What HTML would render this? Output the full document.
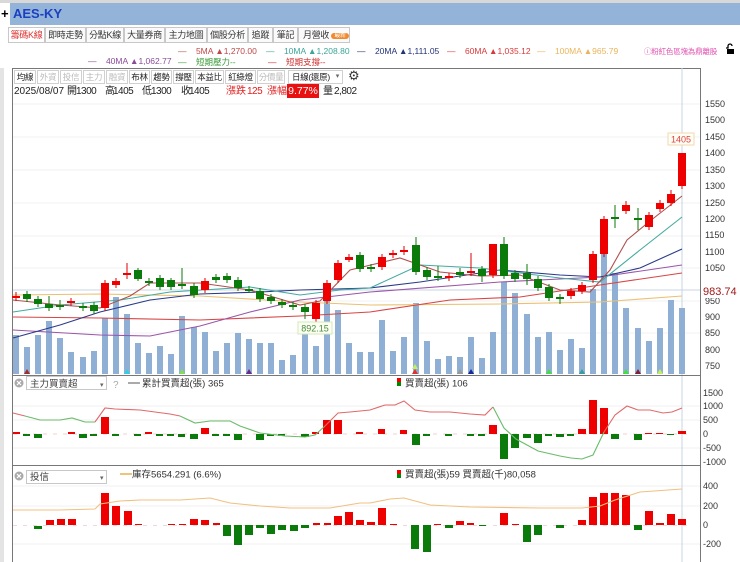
<!DOCTYPE html>
<html><head><meta charset="utf-8">
<style>
*{margin:0;padding:0;box-sizing:border-box}
body{width:740px;height:562px;overflow:hidden;background:#fff;font-family:"Liberation Sans","Noto Sans CJK TC",sans-serif;position:relative}
.a{position:absolute;white-space:nowrap}
.tab{position:absolute;top:27px;height:16px;border:1px solid #c8c8c8;background:#fafafa;font-size:9px;line-height:14px;text-align:center;color:#333;white-space:nowrap;overflow:hidden;letter-spacing:-0.3px}
.btn{position:absolute;top:70px;height:14px;border:1px solid #d0d0d0;background:#fff;font-size:8.5px;line-height:12px;text-align:center;color:#222;white-space:nowrap;overflow:hidden;letter-spacing:-0.3px}
.g{color:#bbb}
.leg{position:absolute;font-size:8.5px;white-space:nowrap}
.inf{position:absolute;top:86px;height:12px;font-size:10px;line-height:12px;color:#222;white-space:nowrap}
.n{letter-spacing:-0.5px}
.r{color:#e02020}
</style></head><body>
<div class="a" style="left:0;top:0;width:740px;height:3px;background:#d8d8d8"></div>
<div class="a" style="left:0;top:3px;width:740px;height:22px;background:#94b3d8"></div>
<div class="a" style="left:0;top:3px;width:10px;height:22px;background:#fff"></div>
<div class="a" style="left:1px;top:6px;font-size:13px;font-weight:bold;color:#000">+</div>
<div class="a" style="left:13px;top:6px;font-size:13px;font-weight:bold;color:#1a3fc0">AES-KY</div>

<div class="tab" style="left:8px;width:37px;color:#d33;background:#fff">籌碼K線</div>
<div class="tab" style="left:45px;width:41px">即時走勢</div>
<div class="tab" style="left:86px;width:38px">分點K線</div>
<div class="tab" style="left:124px;width:41px">大量券商</div>
<div class="tab" style="left:165px;width:42px">主力地圖</div>
<div class="tab" style="left:207px;width:41px">個股分析</div>
<div class="tab" style="left:248px;width:25px">追蹤</div>
<div class="tab" style="left:273px;width:25px">筆記</div>
<div class="tab" style="left:298px;width:52px;text-align:left;padding-left:4px">月營收 <span style="background:#f08a30;color:#fff;border-radius:5px;font-size:6px;padding:0 3px;vertical-align:1px">最新</span></div>

<div class="leg" style="left:178px;top:46px;color:#c04848"><span style="color:#b05050">—</span>&nbsp;&nbsp;&nbsp; 5MA ▲1,270.00</div>
<div class="leg" style="left:266px;top:46px;color:#3aa59a"><span>—</span>&nbsp;&nbsp;&nbsp; 10MA ▲1,208.80</div>
<div class="leg" style="left:357px;top:46px;color:#223377"><span>—</span>&nbsp;&nbsp;&nbsp; 20MA ▲1,111.05</div>
<div class="leg" style="left:447px;top:46px;color:#d83a3a"><span>—</span>&nbsp;&nbsp;&nbsp; 60MA ▲1,035.12</div>
<div class="leg" style="left:537px;top:46px;color:#eab45a"><span>—</span>&nbsp;&nbsp;&nbsp; 100MA ▲965.79</div>
<div class="leg" style="left:644px;top:46px;color:#e050b0;font-size:7.5px;letter-spacing:-0.2px">ⓘ粉紅色區塊為鼎離股</div>
<svg class="a" style="left:724px;top:43px" width="12" height="12" viewBox="0 0 12 12"><path d="M2 5h2V3a2 2 0 0 1 4 0" fill="none" stroke="#000" stroke-width="1.3"/><rect x="3" y="6" width="7" height="5" fill="#000"/></svg>
<div class="leg" style="left:88px;top:56px;color:#8a4a9a"><span>—</span>&nbsp;&nbsp;&nbsp; 40MA ▲1,062.77</div>
<div class="leg" style="left:178px;top:56px;color:#3a9a3a"><span>—</span>&nbsp;&nbsp;&nbsp; 短期壓力--</div>
<div class="leg" style="left:268px;top:56px;color:#d03030"><span>—</span>&nbsp;&nbsp;&nbsp; 短期支撐--</div>

<div class="a" style="left:0;top:68px;width:4px;height:494px;background:#e4e4e4"></div>
<div class="a" style="left:12px;top:68px;width:689px;height:494px;border:1px solid #777;border-bottom:none"></div>

<div class="btn" style="left:14px;width:22px">均線</div>
<div class="btn g" style="left:37px;width:22px">外資</div>
<div class="btn g" style="left:60px;width:22px">投信</div>
<div class="btn g" style="left:83px;width:22px">主力</div>
<div class="btn g" style="left:106px;width:22px">融資</div>
<div class="btn" style="left:129px;width:21px">布林</div>
<div class="btn" style="left:151px;width:21px">趨勢</div>
<div class="btn" style="left:173px;width:21px">撐壓</div>
<div class="btn" style="left:195px;width:29px">本益比</div>
<div class="btn" style="left:225px;width:31px">紅綠燈</div>
<div class="btn g" style="left:257px;width:28px">分價量</div>
<div class="btn" style="left:288px;width:55px;text-align:left;padding-left:3px">日線(還原)<span style="position:absolute;right:3px;font-size:7px;color:#666">▾</span></div>
<div class="a" style="left:348px;top:68px;font-size:13px;color:#333">⚙</div>

<div class="inf" style="left:14px">2025/08/07</div>
<div class="inf" style="left:67px">開</div><div class="inf n" style="left:76px">1300</div>
<div class="inf" style="left:105px">高</div><div class="inf n" style="left:113px">1405</div>
<div class="inf" style="left:142px">低</div><div class="inf n" style="left:151px">1300</div>
<div class="inf" style="left:181px">收</div><div class="inf n" style="left:189px">1405</div>
<div class="inf r" style="left:226px">漲跌</div><div class="inf n r" style="left:247px">125</div>
<div class="inf r" style="left:267px">漲幅</div>
<div class="a" style="left:287px;top:84px;width:32px;height:14px;background:#e81010;color:#fff;font-size:10.5px;line-height:14px;text-align:center">9.77%</div>
<div class="inf" style="left:323px">量</div><div class="inf n" style="left:334px">2,802</div>

<svg class="a" style="left:0;top:0" width="740" height="562" viewBox="0 0 740 562">
<g stroke="#f0f0f0" stroke-width="1">
<line x1="13" x2="700" y1="104" y2="104"/><line x1="13" x2="700" y1="137" y2="137"/><line x1="13" x2="700" y1="170" y2="170"/><line x1="13" x2="700" y1="203" y2="203"/><line x1="13" x2="700" y1="236" y2="236"/><line x1="13" x2="700" y1="268" y2="268"/><line x1="13" x2="700" y1="301" y2="301"/><line x1="13" x2="700" y1="333" y2="333"/>
<line x1="13" x2="700" y1="406" y2="406"/><line x1="13" x2="700" y1="420" y2="420"/><line x1="13" x2="700" y1="448" y2="448"/>
<line x1="13" x2="700" y1="486" y2="486"/><line x1="13" x2="700" y1="506" y2="506"/><line x1="13" x2="700" y1="544" y2="544"/>
</g>
<line x1="682" x2="682" y1="68" y2="562" stroke="#c8d4e4"/>
<line x1="13" x2="700" y1="290" y2="290" stroke="#c8d4e4"/>
<g fill="#8fb0d4">
<rect x="13" y="335" width="6" height="39"/><rect x="24" y="347" width="6" height="27"/><rect x="35" y="335" width="6" height="39"/><rect x="46" y="321" width="6" height="53"/><rect x="57" y="338" width="6" height="36"/><rect x="68" y="352" width="6" height="22"/><rect x="80" y="357" width="6" height="17"/><rect x="91" y="351" width="6" height="23"/><rect x="102" y="318" width="6" height="56"/><rect x="113" y="297" width="6" height="77"/><rect x="124" y="314" width="6" height="60"/><rect x="135" y="343" width="6" height="31"/><rect x="146" y="353" width="6" height="21"/><rect x="157" y="346" width="6" height="28"/><rect x="168" y="354" width="6" height="20"/><rect x="179" y="316" width="6" height="58"/><rect x="191" y="327" width="6" height="47"/><rect x="202" y="332" width="6" height="42"/><rect x="213" y="351" width="6" height="23"/><rect x="224" y="343" width="6" height="31"/><rect x="235" y="333" width="6" height="41"/><rect x="246" y="339" width="6" height="35"/><rect x="257" y="343" width="6" height="31"/><rect x="268" y="343" width="6" height="31"/><rect x="279" y="360" width="6" height="14"/><rect x="290" y="355" width="6" height="19"/><rect x="302" y="327" width="6" height="47"/><rect x="313" y="346" width="6" height="28"/><rect x="324" y="299" width="6" height="75"/><rect x="335" y="310" width="6" height="64"/><rect x="346" y="343" width="6" height="31"/><rect x="357" y="352" width="6" height="22"/><rect x="368" y="352" width="6" height="22"/><rect x="379" y="320" width="6" height="54"/><rect x="390" y="351" width="6" height="23"/><rect x="401" y="337" width="6" height="37"/><rect x="413" y="303" width="6" height="71"/><rect x="424" y="341" width="6" height="33"/><rect x="435" y="359" width="6" height="15"/><rect x="446" y="356" width="6" height="18"/><rect x="457" y="357" width="6" height="17"/><rect x="468" y="337" width="6" height="37"/><rect x="479" y="358" width="6" height="16"/><rect x="490" y="332" width="6" height="42"/><rect x="501" y="282" width="6" height="92"/><rect x="512" y="293" width="6" height="81"/><rect x="524" y="314" width="6" height="60"/><rect x="535" y="337" width="6" height="37"/><rect x="546" y="332" width="6" height="42"/><rect x="557" y="350" width="6" height="24"/><rect x="568" y="339" width="6" height="35"/><rect x="579" y="348" width="6" height="26"/><rect x="590" y="289" width="6" height="85"/><rect x="601" y="254" width="6" height="120"/><rect x="612" y="273" width="6" height="101"/><rect x="623" y="308" width="6" height="66"/><rect x="635" y="328" width="6" height="46"/><rect x="646" y="341" width="6" height="33"/><rect x="657" y="328" width="6" height="46"/><rect x="668" y="300" width="6" height="74"/><rect x="679" y="308" width="6" height="66"/>
</g>
<g fill="none" stroke-width="1.1">
<polyline stroke="#ecc070" points="13,295 100,294 200,296 300,302 370,305 500,304 600,302 682,296"/>
<polyline stroke="#d84444" points="13,317 100,318 200,320 300,316 370,312 450,300 520,297 600,285 682,273"/>
<polyline stroke="#9a55a8" points="13,330 100,335 150,336 200,326 250,312 300,300 370,292 500,282 600,277 682,265"/>
<polyline stroke="#2a3a8a" points="13,338 60,325 100,312 150,300 200,294 260,292 300,290 370,288 420,282 500,270 560,275 600,277 640,268 682,249"/>
<polyline stroke="#44aaa0" points="13,312 60,305 120,300 170,292 250,287 300,295 340,290 370,288 420,265 480,268 560,278 600,282 640,250 682,217"/>
<polyline stroke="#b05050" points="13,300 60,305 100,308 130,296 150,283 200,283 250,290 300,305 320,301 350,270 400,258 440,272 480,276 520,275 560,290 590,292 610,270 627,240 650,221 682,196"/>
</g>
<g stroke="#e00000" stroke-width="1">
<path d="M16 292V301M71 298V306M105 280V311M116 278V288M127 263V279M205 278V293M316 300V322M327 280V304M338 260V283M349 254V262M382 254V270M393 250V258M404 246V255M449 273V281M471 253V276M493 244V278M571 288V299M582 282V294M593 251V283M604 216V257M626 201V214M649 212V230M660 200V212M671 190V206M682 153V189"/>
</g>
<g fill="#ee0000">
<rect x="12" y="296" width="8" height="2"/><rect x="67" y="301" width="8" height="2"/><rect x="101" y="283" width="8" height="25"/><rect x="112" y="281" width="8" height="4"/><rect x="123" y="273" width="8" height="2"/><rect x="201" y="281" width="8" height="9"/><rect x="312" y="303" width="8" height="16"/><rect x="323" y="283" width="8" height="18"/><rect x="334" y="263" width="8" height="17"/><rect x="345" y="257" width="8" height="3"/><rect x="378" y="257" width="8" height="10"/><rect x="389" y="253" width="8" height="2"/><rect x="400" y="250" width="8" height="2"/><rect x="445" y="276" width="8" height="2"/><rect x="467" y="271" width="8" height="2"/><rect x="489" y="244" width="8" height="31"/><rect x="567" y="291" width="8" height="5"/><rect x="578" y="285" width="8" height="6"/><rect x="589" y="254" width="8" height="26"/><rect x="600" y="219" width="8" height="35"/><rect x="622" y="205" width="8" height="6"/><rect x="645" y="215" width="8" height="12"/><rect x="656" y="203" width="8" height="6"/><rect x="667" y="194" width="8" height="9"/><rect x="678" y="153" width="8" height="33"/>
</g>
<g stroke="#0a7a0a" stroke-width="1">
<path d="M27 291V302M38 296V307M49 296V311M60 300V310M83 303V311M94 302V314M138 268V281M149 278V286M160 275V290M171 278V290M182 268V289M194 283V298M216 274V283M227 273V283M238 277V291M249 286V293M260 288V302M271 294V304M282 299V308M293 302V310M305 304V319M360 252V272M371 264V272M416 237V275M427 267V280M438 266V281M460 268V278M482 266V282M504 237V279M515 270V282M527 264V285M538 276V291M549 284V301M560 294V304M615 205V228M638 208V230"/>
</g>
<g fill="#0a7a0a">
<rect x="23" y="294" width="8" height="5"/><rect x="34" y="299" width="8" height="5"/><rect x="45" y="304" width="8" height="4"/><rect x="56" y="305" width="8" height="2"/><rect x="79" y="306" width="8" height="2"/><rect x="90" y="305" width="8" height="6"/><rect x="134" y="270" width="8" height="9"/><rect x="145" y="281" width="8" height="2"/><rect x="156" y="278" width="8" height="9"/><rect x="167" y="280" width="8" height="7"/><rect x="178" y="284" width="8" height="2"/><rect x="190" y="286" width="8" height="9"/><rect x="212" y="277" width="8" height="3"/><rect x="223" y="276" width="8" height="4"/><rect x="234" y="280" width="8" height="8"/><rect x="245" y="289" width="8" height="2"/><rect x="256" y="291" width="8" height="8"/><rect x="267" y="297" width="8" height="4"/><rect x="278" y="302" width="8" height="3"/><rect x="289" y="305" width="8" height="2"/><rect x="301" y="307" width="8" height="5"/><rect x="356" y="255" width="8" height="14"/><rect x="367" y="267" width="8" height="2"/><rect x="412" y="245" width="8" height="27"/><rect x="423" y="270" width="8" height="7"/><rect x="434" y="276" width="8" height="2"/><rect x="456" y="272" width="8" height="3"/><rect x="478" y="269" width="8" height="7"/><rect x="500" y="244" width="8" height="32"/><rect x="511" y="273" width="8" height="6"/><rect x="523" y="273" width="8" height="6"/><rect x="534" y="279" width="8" height="9"/><rect x="545" y="287" width="8" height="11"/><rect x="556" y="297" width="8" height="2"/><rect x="611" y="217" width="8" height="2"/><rect x="634" y="218" width="8" height="2"/>
</g>
<g>
<path d="M24 374l3-5 3 5z" fill="#a03030"/><path d="M124 374l3-5 3 5z" fill="#30d0e0"/><path d="M179 374l3-5 3 5z" fill="#80e050"/><path d="M246 374l3-5 3 5z" fill="#6a2a90"/><path d="M412 374l3-5 3 5z" fill="#e03030"/><path d="M412 369l3-5 3 5z" fill="#c0f060"/><path d="M457 374l3-5 3 5z" fill="#999"/><path d="M468 374l3-5 3 5z" fill="#1a2a9a"/><path d="M546 374l3-5 3 5z" fill="#40e040"/><path d="M579 374l3-5 3 5z" fill="#30a0a0"/><path d="M623 374l3-5 3 5z" fill="#40e040"/><path d="M635 374l3-5 3 5z" fill="#802040"/><path d="M657 374l3-5 3 5z" fill="#c0f060"/>
</g>
<rect x="668" y="133" width="26" height="12" fill="#fffef4" stroke="#f0d8b0"/>
<text x="681" y="142.5" font-size="9" fill="#e04040" text-anchor="middle" font-family="Liberation Sans">1405</text>
<rect x="298" y="322" width="34" height="12" fill="#fbfff4" stroke="#d4e8b8"/>
<text x="315" y="331.5" font-size="9" fill="#4a8a3a" text-anchor="middle" font-family="Liberation Sans">892.15</text>
<g font-size="9" fill="#333" font-family="Liberation Sans">
<text x="705" y="107">1550</text><text x="705" y="123">1500</text><text x="705" y="140">1450</text><text x="705" y="156">1400</text><text x="705" y="173">1350</text><text x="705" y="189">1300</text><text x="705" y="206">1250</text><text x="705" y="222">1200</text><text x="705" y="238">1150</text><text x="705" y="255">1100</text><text x="705" y="271">1050</text><text x="705" y="304">950</text><text x="705" y="320">900</text><text x="705" y="336">850</text><text x="705" y="353">800</text><text x="705" y="369">750</text>
<text x="703" y="396">1500</text><text x="703" y="409">1000</text><text x="703" y="423">500</text><text x="703" y="437">0</text><text x="703" y="451">-500</text><text x="703" y="465">-1000</text>
<text x="703" y="489">400</text><text x="703" y="509">200</text><text x="703" y="528">0</text><text x="703" y="547">-200</text>
</g>
<rect x="702" y="284" width="38" height="14" fill="#fff"/>
<text x="703" y="295" font-size="11" fill="#a01818" font-family="Liberation Sans">983.74</text>
<line x1="12" x2="701" y1="375.5" y2="375.5" stroke="#777"/>
<line x1="12" x2="701" y1="465.5" y2="465.5" stroke="#777"/>
<line x1="13" x2="690" y1="434" y2="434" stroke="#f0d0d0" stroke-dasharray="4 6"/>
<g fill="#ee0000">
<rect x="13" y="432" width="7" height="2"/><rect x="68" y="432" width="7" height="2"/><rect x="101" y="417" width="8" height="17"/><rect x="145" y="432" width="7" height="2"/><rect x="201" y="428" width="8" height="6"/><rect x="312" y="432" width="7" height="2"/><rect x="323" y="420" width="8" height="14"/><rect x="334" y="420" width="8" height="14"/><rect x="356" y="432" width="7" height="2"/><rect x="378" y="429" width="7" height="5"/><rect x="400" y="430" width="7" height="4"/><rect x="489" y="425" width="8" height="9"/><rect x="578" y="429" width="8" height="5"/><rect x="589" y="400" width="8" height="34"/><rect x="600" y="408" width="8" height="26"/><rect x="645" y="433" width="7" height="1"/><rect x="656" y="433" width="7" height="1"/><rect x="678" y="431" width="8" height="3"/>
</g>
<g fill="#0a7a0a">
<rect x="23" y="434" width="7" height="2"/><rect x="34" y="434" width="8" height="4"/><rect x="79" y="434" width="8" height="4"/><rect x="90" y="434" width="7" height="2"/><rect x="112" y="434" width="7" height="2"/><rect x="134" y="434" width="7" height="2"/><rect x="156" y="434" width="7" height="2"/><rect x="167" y="434" width="7" height="2"/><rect x="178" y="434" width="7" height="3"/><rect x="190" y="434" width="8" height="5"/><rect x="212" y="434" width="7" height="2"/><rect x="223" y="434" width="7" height="2"/><rect x="234" y="434" width="8" height="6"/><rect x="256" y="434" width="8" height="6"/><rect x="267" y="434" width="7" height="2"/><rect x="278" y="434" width="7" height="2"/><rect x="301" y="434" width="8" height="3"/><rect x="412" y="434" width="8" height="11"/><rect x="423" y="434" width="7" height="2"/><rect x="445" y="434" width="7" height="2"/><rect x="467" y="434" width="7" height="2"/><rect x="478" y="434" width="7" height="2"/><rect x="500" y="434" width="8" height="25"/><rect x="511" y="434" width="8" height="14"/><rect x="523" y="434" width="8" height="4"/><rect x="534" y="434" width="8" height="9"/><rect x="545" y="434" width="7" height="2"/><rect x="556" y="434" width="8" height="3"/><rect x="567" y="434" width="7" height="2"/><rect x="611" y="434" width="8" height="5"/><rect x="634" y="434" width="8" height="6"/><rect x="667" y="434" width="7" height="1"/>
</g>
<g fill="none" stroke-width="1.1">
<polyline stroke="#e06a6a" points="13,413 25,416"/>
<polyline stroke="#6abb6a" points="25,416 40,420 60,420 72,418 85,422 95,422"/>
<polyline stroke="#e06a6a" points="95,422 105,408 115,409 140,410 170,414 180,416"/>
<polyline stroke="#6abb6a" points="180,416 195,423 210,421 230,421 240,426 260,433 285,436 305,437 315,435 325,426"/>
<polyline stroke="#e06a6a" points="325,426 338,413 350,412 370,410 385,405 395,405 404,401 415,410 430,412 450,412 470,414 485,415 493,407"/>
<polyline stroke="#6abb6a" points="493,407 504,428 516,439 538,451 560,456 571,458 582,459 593,455 604,432"/>
<polyline stroke="#e06a6a" points="604,432 615,415 627,406 638,410 650,410 663,413 672,412 682,408"/>
</g>
<line x1="13" x2="690" y1="525.5" y2="525.5" stroke="#f0d8d8" stroke-dasharray="4 6"/>
<g fill="#ee0000">
<rect x="46" y="520" width="8" height="5"/><rect x="57" y="519" width="8" height="6"/><rect x="68" y="519" width="8" height="6"/><rect x="101" y="493" width="8" height="32"/><rect x="112" y="506" width="8" height="19"/><rect x="124" y="511" width="8" height="14"/><rect x="135" y="524" width="7" height="1"/><rect x="168" y="524" width="7" height="1"/><rect x="179" y="524" width="7" height="1"/><rect x="190" y="519" width="8" height="6"/><rect x="201" y="520" width="8" height="5"/><rect x="213" y="523" width="7" height="2"/><rect x="313" y="523" width="7" height="2"/><rect x="324" y="523" width="7" height="2"/><rect x="334" y="516" width="8" height="9"/><rect x="345" y="512" width="8" height="13"/><rect x="356" y="520" width="8" height="5"/><rect x="367" y="522" width="8" height="3"/><rect x="378" y="508" width="8" height="17"/><rect x="390" y="524" width="7" height="1"/><rect x="434" y="524" width="7" height="1"/><rect x="456" y="521" width="8" height="4"/><rect x="467" y="523" width="7" height="2"/><rect x="500" y="513" width="8" height="12"/><rect x="512" y="524" width="7" height="1"/><rect x="578" y="520" width="8" height="5"/><rect x="589" y="497" width="8" height="28"/><rect x="600" y="493" width="8" height="32"/><rect x="611" y="493" width="8" height="32"/><rect x="622" y="495" width="8" height="30"/><rect x="645" y="511" width="8" height="14"/><rect x="656" y="523" width="8" height="2"/><rect x="667" y="514" width="8" height="11"/><rect x="678" y="519" width="8" height="6"/>
</g>
<g fill="#0a7a0a">
<rect x="34" y="526" width="8" height="3"/><rect x="223" y="525" width="8" height="11"/><rect x="234" y="525" width="8" height="20"/><rect x="245" y="525" width="8" height="10"/><rect x="256" y="525" width="8" height="3"/><rect x="267" y="525" width="8" height="9"/><rect x="278" y="525" width="8" height="5"/><rect x="290" y="525" width="8" height="6"/><rect x="301" y="525" width="8" height="3"/><rect x="411" y="525" width="8" height="24"/><rect x="423" y="525" width="8" height="27"/><rect x="445" y="525" width="8" height="3"/><rect x="479" y="525" width="7" height="1"/><rect x="523" y="525" width="8" height="17"/><rect x="534" y="525" width="8" height="10"/><rect x="556" y="525" width="8" height="3"/><rect x="634" y="525" width="8" height="5"/>
</g>
<polyline fill="none" stroke="#f0c080" stroke-width="1.1" points="13,510 60,510 95,509 100,504 120,501 140,500 180,500 210,498 230,503 260,506 290,508 330,508 360,503 370,503 390,499 404,498 430,505 470,507 540,508 582,508 600,506 615,500 640,492 682,489"/>
<g font-family="Liberation Sans,Noto Sans CJK TC,sans-serif">
<circle cx="19" cy="383" r="4.5" fill="#aaa"/><path d="M17 381l4 4M21 381l-4 4" stroke="#fff" stroke-width="1.2"/>
<rect x="26.5" y="376.5" width="80" height="13" fill="#fff" stroke="#c8c8c8"/>
<text x="30" y="387" font-size="9.5" fill="#444">主力買賣超</text><text x="100" y="387" font-size="7" fill="#666">▾</text>
<text x="113" y="388" font-size="10" fill="#aaa">?</text>
<line x1="128" x2="140" y1="383" y2="383" stroke="#555"/>
<text x="142" y="386.5" font-size="9.5" fill="#333">累計買賣超(張) 365</text>
<rect x="397" y="378" width="4" height="4" fill="#e00"/><rect x="397" y="382" width="4" height="4" fill="#080"/>
<text x="405" y="386.5" font-size="9.5" fill="#333">買賣超(張) 106</text>
<circle cx="19" cy="476" r="4.5" fill="#aaa"/><path d="M17 474l4 4M21 474l-4 4" stroke="#fff" stroke-width="1.2"/>
<rect x="26.5" y="470.5" width="80" height="13" fill="#fff" stroke="#c8c8c8"/>
<text x="30" y="480" font-size="9.5" fill="#444">投信</text><text x="100" y="480" font-size="7" fill="#666">▾</text>
<line x1="120" x2="132" y1="474" y2="474" stroke="#e8b050" stroke-width="1.5"/>
<text x="132" y="477.5" font-size="9.5" fill="#333">庫存5654.291 (6.6%)</text>
<rect x="397" y="470" width="4" height="4" fill="#e00"/><rect x="397" y="474" width="4" height="4" fill="#080"/>
<text x="405" y="477.5" font-size="9.5" fill="#333">買賣超(張)59 買賣超(千)80,058</text>
</g>
</svg>
</body></html>
